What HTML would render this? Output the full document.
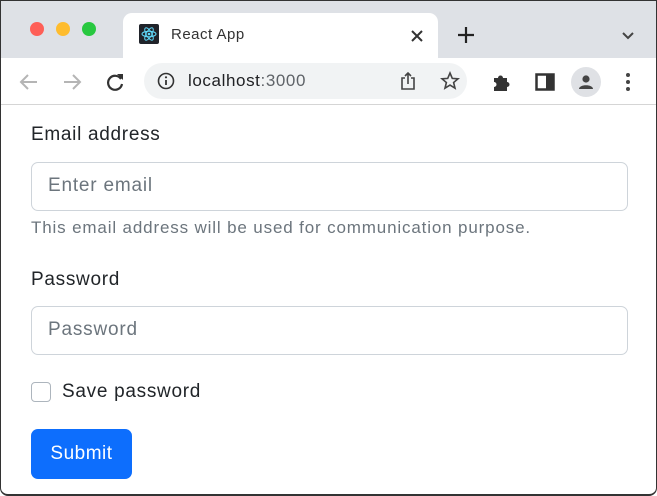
<!DOCTYPE html>
<html><head><meta charset="utf-8"><style>
*{margin:0;padding:0;box-sizing:border-box}
body{width:657px;height:496px;overflow:hidden;background:#fff;font-family:"Liberation Sans",sans-serif;position:relative}
.frame{position:absolute;left:0;top:0;width:657px;height:496px;border:1px solid #333;border-bottom:2px solid #333;border-radius:0 0 8px 8px;overflow:hidden;background:#fff}
.tabbar{position:absolute;left:0;top:0;width:657px;height:57px;background:#dee1e6}
.dot{position:absolute;top:21px;width:14px;height:14px;border-radius:50%}
.tab{position:absolute;left:122px;top:12px;width:315px;height:46px;background:#fff;border-radius:9px 9px 0 0}
.tab .t{position:absolute;left:48px;top:13px;font-size:15px;color:#333;letter-spacing:0.5px}
.toolbar{position:absolute;left:0;top:57px;width:657px;height:47px;background:#fff;border-bottom:1px solid #d5d5d5}
.omni{position:absolute;left:143px;top:5px;width:323px;height:36px;background:#f1f3f4;border-radius:18px}
.omni .u{position:absolute;left:44px;top:8px;font-size:17px;color:#202124;letter-spacing:0.6px}
.ic{position:absolute}
.content{position:absolute;left:30px;top:105px;width:597px;color:#212529}
.lbl{font-size:19px;position:absolute;left:0;letter-spacing:0.7px}
.inp{position:absolute;left:0;width:597px;height:49px;border:1px solid #ced4da;border-radius:7px;font-size:19px;color:#6c757d;padding:12px 16px;letter-spacing:0.8px}
.help{position:absolute;left:0;font-size:17px;color:#6c757d;letter-spacing:0.85px}
.btn{position:absolute;left:0;top:323px;width:101px;height:50px;background:#0d6efd;border-radius:7px;color:#fff;font-size:19px;text-align:center;line-height:50px;letter-spacing:0.5px}
.cb{position:absolute;left:0;top:276px;width:20px;height:20px;border:1px solid #adb5bd;border-radius:4px}
</style></head><body><div class="frame">
<div class="tabbar">
 <div class="dot" style="left:29px;background:#fe5f57"></div>
 <div class="dot" style="left:55px;background:#febc2e"></div>
 <div class="dot" style="left:81px;background:#28c840"></div>
 <div class="tab">
  <svg class="ic" style="left:16px;top:11px" width="20" height="20" viewBox="0 0 20 20"><rect width="20" height="20" rx="2" fill="#20232a"/><g fill="none" stroke="#61dafb" stroke-width="1"><ellipse cx="10" cy="10" rx="7" ry="2.8"/><ellipse cx="10" cy="10" rx="7" ry="2.8" transform="rotate(60 10 10)"/><ellipse cx="10" cy="10" rx="7" ry="2.8" transform="rotate(120 10 10)"/></g><circle cx="10" cy="10" r="1.3" fill="#61dafb"/></svg>
  <div class="t">React App</div>
  <svg class="ic" style="left:287px;top:16px" width="14" height="14" viewBox="0 0 14 14"><path d="M2 2L12 12M12 2L2 12" stroke="#333" stroke-width="2"/></svg>
 </div>
 <svg class="ic" style="left:456px;top:25px" width="18" height="18" viewBox="0 0 18 18"><path d="M9 1V17M1 9H17" stroke="#222" stroke-width="2.2"/></svg>
 <svg class="ic" style="left:620px;top:30px" width="14" height="10" viewBox="0 0 14 10"><path d="M2 2L7 7L12 2" stroke="#444" stroke-width="2" fill="none"/></svg>
</div>
<div class="toolbar">
 <svg class="ic" style="left:17px;top:13px" width="22" height="22" viewBox="0 0 22 22"><path d="M19 11H4M10 4L3 11L10 18" stroke="#b5b5b5" stroke-width="2" fill="none"/></svg>
 <svg class="ic" style="left:60px;top:13px" width="22" height="22" viewBox="0 0 22 22"><path d="M3 11H18M12 4L19 11L12 18" stroke="#b5b5b5" stroke-width="2" fill="none"/></svg>
 <svg class="ic" style="left:103px;top:13px" width="22" height="22" viewBox="0 0 22 22"><path d="M17 8A7 7 0 1 0 18 13" stroke="#333" stroke-width="2.2" fill="none"/><path d="M13 3H19V9Z" fill="#333"/></svg>
 <div class="omni">
  <svg class="ic" style="left:13px;top:9px" width="18" height="18" viewBox="0 0 18 18"><circle cx="9" cy="9" r="7.5" stroke="#333" stroke-width="1.6" fill="none"/><path d="M9 8V13" stroke="#333" stroke-width="1.8"/><circle cx="9" cy="5.3" r="1.1" fill="#333"/></svg>
  <div class="u">localhost<span style="color:#5f6368">:3000</span></div>
  <svg class="ic" style="left:256px;top:8px" width="16" height="20" viewBox="0 0 16 20"><path d="M5 7H2V18H14V7H11M8 13V2M5 5L8 2L11 5" stroke="#444" stroke-width="1.6" fill="none"/></svg>
  <svg class="ic" style="left:296px;top:8px" width="20" height="20" viewBox="0 0 20 20"><path d="M10 2L12.3 7.4L18 7.8L13.6 11.5L15 17.2L10 14.1L5 17.2L6.4 11.5L2 7.8L7.7 7.4Z" stroke="#444" stroke-width="1.6" fill="none"/></svg>
 </div>
 <svg class="ic" style="left:490px;top:13px" width="22" height="22" viewBox="0 0 22 22"><path d="M3 7H7A2.5 2.5 0 1 1 12 7H16V11A2.5 2.5 0 1 1 16 16V20H3V16A2.5 2.5 0 1 0 3 11Z" fill="#333"/></svg>
 <svg class="ic" style="left:534px;top:15px" width="20" height="18" viewBox="0 0 20 18"><rect x="1.5" y="1.5" width="17" height="15" stroke="#333" stroke-width="2.5" fill="none"/><rect x="11" y="1.5" width="7" height="15" fill="#333"/></svg>
 <div class="ic" style="left:570px;top:9px;width:30px;height:30px;border-radius:50%;background:#dfe1e5"></div>
 <svg class="ic" style="left:575px;top:14px" width="20" height="20" viewBox="0 0 20 20"><circle cx="10" cy="7" r="3.6" fill="#444"/><path d="M3 17C3 12 17 12 17 17Z" fill="#444"/></svg>
 <svg class="ic" style="left:624px;top:13px" width="6" height="22" viewBox="0 0 6 22"><circle cx="3" cy="4" r="2" fill="#444"/><circle cx="3" cy="11" r="2" fill="#444"/><circle cx="3" cy="18" r="2" fill="#444"/></svg>
</div>
<div class="content">
 <div class="lbl" style="top:18px">Email address</div>
 <div class="inp" style="top:56px">Enter email</div>
 <div class="help" style="top:112px">This email address will be used for communication purpose.</div>
 <div class="lbl" style="top:163px">Password</div>
 <div class="inp" style="top:200px">Password</div>
 <div class="cb"></div>
 <div class="lbl" style="top:275px;left:31px">Save password</div>
 <div class="btn">Submit</div>
</div>
</div></body></html>
